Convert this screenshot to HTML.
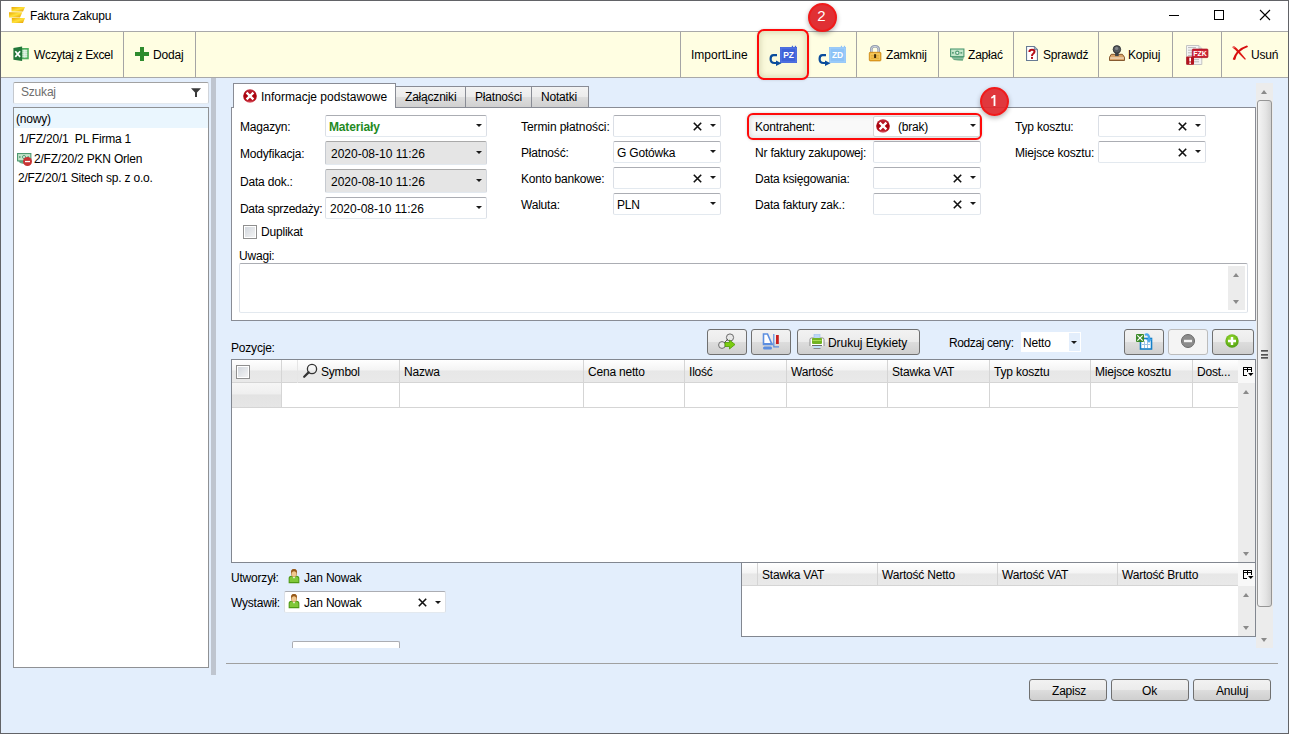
<!DOCTYPE html>
<html><head><meta charset="utf-8">
<style>
*{margin:0;padding:0;box-sizing:border-box}
html,body{width:1289px;height:734px;overflow:hidden;background:#e3eefc;font-family:"Liberation Sans",sans-serif;font-size:12px;color:#1e1e1e}
.a{position:absolute}
.t{position:absolute;font-size:12px;line-height:14px;white-space:nowrap;color:#000;letter-spacing:-0.2px}
#win{position:absolute;left:0;top:0;width:1289px;height:734px;border:1px solid #626367;background:#e3eefc}
#title{position:absolute;left:1px;top:1px;width:1287px;height:30px;background:#fff}
#tb{position:absolute;left:1px;top:31px;width:1287px;height:47px;background:#fffee2;border-top:1px solid #a9a9a9;border-bottom:1px solid #a9a9a9}
.sep{position:absolute;top:32px;width:1px;height:45px;background:#a5a5a5}
.combo{position:absolute;background:#fff;border:1px solid #abadb3;border-radius:2px;border-bottom-color:#e3e9ef;border-left-color:#dbdfe6;border-right-color:#dbdfe6}
.dis{background:#e5e5e5;border-color:#a9a9a9 #d2d6dc #e3e9ef #c6cad0}
.arr{position:absolute;width:0;height:0;border-left:3px solid transparent;border-right:3px solid transparent;border-top:3px solid #1a1a1a}
.xg{position:absolute;width:9px;height:9px}
.btn{position:absolute;border:1px solid #707070;border-radius:3px;background:linear-gradient(#f2f2f2 0%,#ebebeb 50%,#dddddd 50%,#cfcfcf 100%)}
.hdr{position:absolute;background:linear-gradient(#ffffff 0%,#f4f4f4 45%,#e7e7e7 50%,#e9e9e9 100%)}
.vs{position:absolute;width:1px;background:#d5d5d5}
.sa{position:absolute;width:0;height:0;border-left:3.5px solid transparent;border-right:3.5px solid transparent}
.up{border-bottom:4px solid #8a8a8a}
.dn{border-top:4px solid #8a8a8a}
</style></head><body>
<div id="win"></div>
<div id="title"></div>
<div id="tb"></div>

<!-- title bar -->
<svg class="a" style="left:9px;top:7px" width="16" height="16" viewBox="0 0 16 16">
<defs><linearGradient id="cg" x1="0" y1="0" x2="1" y2="1"><stop offset="0" stop-color="#e8a400"/><stop offset="0.5" stop-color="#ffe23a"/><stop offset="1" stop-color="#e39a00"/></linearGradient></defs>
<path d="M2.5 0 H16 L14 4.6 H2.5 Z" fill="url(#cg)"/>
<path d="M0 5.2 H13.3 L11 10.4 H0 Z" fill="url(#cg)"/>
<path d="M2.8 10.9 H16 L14 16 H2.8 Z" fill="url(#cg)"/>
</svg>
<div class="t" style="left:30px;top:9px;color:#000">Faktura Zakupu</div>
<div class="a" style="left:1169px;top:15px;width:10px;height:1px;background:#000"></div>
<div class="a" style="left:1214px;top:10px;width:10px;height:10px;border:1px solid #000"></div>
<svg class="a" style="left:1259px;top:9px" width="12" height="12" viewBox="0 0 12 12"><path d="M1 1 L11 11 M11 1 L1 11" stroke="#000" stroke-width="1.1"/></svg>

<!-- toolbar separators -->
<div class="sep" style="left:123px"></div>
<div class="sep" style="left:195px"></div>
<div class="sep" style="left:680px"></div>
<div class="sep" style="left:856px"></div>
<div class="sep" style="left:938px"></div>
<div class="sep" style="left:1013px"></div>
<div class="sep" style="left:1098px"></div>
<div class="sep" style="left:1172px"></div>
<div class="sep" style="left:1221px"></div>

<!-- toolbar items -->
<svg class="a" style="left:13px;top:46px" width="16" height="16" viewBox="0 0 16 16">
<rect x="9" y="2" width="6.8" height="11.3" fill="#4fae5c"/>
<rect x="9.4" y="3.8" width="4.8" height="7.8" fill="#b9dfbf"/>
<path d="M9.4 4.3H14.2M9.4 6.3H14.2M9.4 8.3H14.2M9.4 10.3H14.2M11.8 3.8V11.6" stroke="#e9f6eb" stroke-width="0.8"/>
<path d="M0.4 2 L9.1 0.6 V15.1 L0.4 13.8 Z" fill="#23773a"/>
<path d="M2.3 5.3 L7.1 10.9 M7.1 5.3 L2.3 10.9" stroke="#fff" stroke-width="1.7"/>
</svg>
<div class="t" style="left:34px;top:48px;letter-spacing:-0.35px">Wczytaj z Excel</div>
<svg class="a" style="left:135px;top:47px" width="14" height="14" viewBox="0 0 14 14"><path d="M5 0h4v5h5v4H9v5H5V9H0V5h5z" fill="#2e8b2e"/></svg>
<div class="t" style="left:153px;top:48px">Dodaj</div>
<div class="t" style="left:691px;top:48px;letter-spacing:0">ImportLine</div>

<!-- red highlight box 2 -->
<div class="a" style="left:757px;top:29px;width:52px;height:51px;border:2px solid #ff0a0a;border-radius:7px;box-shadow:inset 0 0 6px 1px rgba(120,120,60,0.28), 0 0 3px rgba(0,0,0,0.15);background:#fbfadc"></div>
<!-- PZ icon -->
<svg class="a" style="left:766px;top:42px" width="34" height="26" viewBox="0 0 34 26">
<rect x="14" y="5" width="17" height="16" fill="#3f63d8"/>
<rect x="15" y="6" width="15" height="14" fill="none" stroke="#5a7ae6" stroke-width="1"/>
<rect x="25.8" y="3.8" width="1.3" height="1.5" fill="#3f63d8"/><rect x="28.8" y="3.8" width="1.3" height="1.5" fill="#3f63d8"/>
<text x="22.6" y="15.8" font-family="Liberation Sans" font-weight="bold" font-size="8.5" fill="#fff" text-anchor="middle">PZ</text>
<path d="M11 13.1 H7.5 Q4.6 13.1 4.6 17 Q4.6 21 8.5 21 H10.5" stroke="#0a4c9c" stroke-width="2.2" fill="none"/>
<path d="M10 18.6 L15.5 21.3 L10 24 Z" fill="#0a4c9c"/>
</svg>
<svg class="a" style="left:815px;top:42px" width="34" height="26" viewBox="0 0 34 26">
<rect x="14" y="5" width="17" height="16" fill="#8ec3f7"/>
<rect x="15" y="6" width="15" height="14" fill="none" stroke="#a6d2fa" stroke-width="1"/>
<rect x="25.8" y="3.8" width="1.3" height="1.5" fill="#8ec3f7"/><rect x="28.8" y="3.8" width="1.3" height="1.5" fill="#8ec3f7"/>
<text x="22.6" y="15.8" font-family="Liberation Sans" font-weight="bold" font-size="8.5" fill="#fff" text-anchor="middle">ZD</text>
<path d="M11 13.1 H7.5 Q4.6 13.1 4.6 17 Q4.6 21 8.5 21 H10.5" stroke="#0a4c9c" stroke-width="2.2" fill="none"/>
<path d="M10 18.6 L15.5 21.3 L10 24 Z" fill="#0a4c9c"/>
</svg>

<!-- lock -->
<svg class="a" style="left:868px;top:45px" width="14" height="17" viewBox="0 0 14 17">
<path d="M3.3 7.5 V4.6 Q3.3 1.3 7 1.3 Q10.7 1.3 10.7 4.6 V7.5" stroke="#8e98aa" stroke-width="2.6" fill="none"/>
<path d="M3.3 7 V4.6 Q3.3 1.3 7 1.3 Q10.7 1.3 10.7 4.6 V7" stroke="#d8dde6" stroke-width="0.9" fill="none"/>
<rect x="1.3" y="7.3" width="11.6" height="8.6" rx="0.8" fill="#eba629" stroke="#c98512" stroke-width="0.8"/>
<rect x="2.4" y="8.3" width="9.4" height="6.6" fill="#f9d46a"/>
<path d="M3 10.2H11.2M3 12H11.2M3 13.8H11.2" stroke="#dc9c22" stroke-width="0.9"/>
<rect x="6.1" y="9.2" width="2" height="3.8" fill="#3e2a08"/>
</svg>
<div class="t" style="left:886px;top:48px">Zamknij</div>
<!-- money -->
<svg class="a" style="left:950px;top:48px" width="15" height="14" viewBox="0 0 15 14">
<path d="M1 8.6 L14 8.6 L12.8 12.8 Q8 12.6 3.8 12 Z" fill="#6aaa84"/>
<path d="M2.5 10.2 L13.2 10.4" stroke="#9ccab0" stroke-width="0.8"/>
<rect x="0.6" y="1" width="13.3" height="7.6" fill="#c4e6ca" stroke="#4f9a72" stroke-width="1.1"/>
<circle cx="7.3" cy="4.8" r="1.7" fill="#eef7f0" stroke="#4f9a72" stroke-width="1.1"/>
<rect x="2" y="4" width="1.8" height="1.7" fill="#5fa07c"/><rect x="10.4" y="4" width="1.8" height="1.7" fill="#5fa07c"/>
</svg>
<div class="t" style="left:968px;top:48px">Zapłać</div>
<!-- question doc -->
<svg class="a" style="left:1026px;top:46px" width="13" height="15" viewBox="0 0 13 15">
<path d="M0.55 0.55 H8.3 L11.45 3.7 V14.45 H0.55 Z" fill="#fff" stroke="#687b94" stroke-width="1.1"/>
<path d="M8.3 0.55 V3.7 H11.45" fill="#9aaabb" stroke="#687b94" stroke-width="0.8"/>
<path d="M3.4 6 Q3.4 3.8 6 3.8 Q8.5 3.8 8.5 5.8 Q8.5 7 7 7.8 Q6 8.3 6 9.9" stroke="#b50d16" stroke-width="2" fill="none"/>
<rect x="5" y="10.9" width="2" height="2" fill="#b50d16"/>
</svg>
<div class="t" style="left:1043px;top:48px">Sprawdź</div>
<!-- stamp -->
<svg class="a" style="left:1109px;top:45px" width="16" height="16" viewBox="0 0 16 16">
<path d="M2.2 9.3 H13.4 L15.5 12.2 V15.5 H0.5 V12.2 Z" fill="#d9a46a" stroke="#7a4c22" stroke-width="0.9"/>
<rect x="1.2" y="12.4" width="13.6" height="1.3" fill="#f2dcc0"/>
<rect x="6.1" y="6.5" width="3.6" height="4.6" fill="#3e4246"/>
<circle cx="7.9" cy="4.4" r="3.8" fill="#55595e" stroke="#2a2c2e" stroke-width="0.8"/>
<circle cx="7.6" cy="3.4" r="1.6" fill="#a0a4a8" opacity="0.6"/>
</svg>
<div class="t" style="left:1128px;top:48px">Kopiuj</div>
<!-- FZK -->
<svg class="a" style="left:1186px;top:45px" width="23" height="20" viewBox="0 0 23 20">
<path d="M0.5 0.5 H12.8 L15.8 3.5 V19.5 H0.5 Z" fill="#f4f4f4" stroke="#c4c4c4"/>
<path d="M12.8 0.5 V3.5 H15.8" fill="#e0e0e0" stroke="#b8b8b8" stroke-width="0.6"/>
<path d="M2 2.6H10M2 5.2H6M2 7.8H6M2 10.4H6M8 14.6H13M8 16.8H13" stroke="#b4b4b4" stroke-width="0.9"/>
<rect x="6.3" y="4.1" width="15.6" height="8.5" rx="0.8" fill="#cc2232" stroke="#a81222" stroke-width="0.8"/>
<text x="14.1" y="11.3" font-family="Liberation Sans" font-weight="bold" font-size="7" fill="#fff" text-anchor="middle">FZK</text>
<rect x="0.2" y="11.4" width="7.8" height="8.4" rx="1" fill="#b3141e"/>
<rect x="3.3" y="12.7" width="1.7" height="3.8" fill="#fff"/><rect x="3.3" y="17.4" width="1.7" height="1.5" fill="#fff"/>
</svg>
<!-- usun X -->
<svg class="a" style="left:1232px;top:45px" width="17" height="17" viewBox="0 0 17 17">
<path d="M0.4 2.6 Q0.6 0.9 2.6 1.4 Q4.5 2.3 7.5 6.2 L13.9 13.9 Q13.6 14.9 12.6 14.5 L5.5 7.2 Q3 4.6 0.4 2.6 Z" fill="#de1a14"/>
<path d="M15.9 2 Q9.8 4 6.4 7.8 Q4.3 10.4 3.4 14.6 Q2.2 15.6 0.7 14.2 Q2 10 5 6.4 Q9 2.2 14.8 0.5 Q16 0.6 15.9 2 Z" fill="#d80e0e"/>
<circle cx="1.8" cy="2.2" r="1" fill="#f08a8a" opacity="0.7"/>
</svg>
<div class="t" style="left:1251px;top:48px">Usuń</div>

<!-- left panel -->
<div class="combo" style="left:13px;top:82px;width:196px;height:22px;border-color:#a2a2a2 #d0d4da #e3e9ef #c4c8ce"></div>
<div class="t" style="left:21px;top:85px;color:#6d6d6d">Szukaj</div>
<svg class="a" style="left:191px;top:88px" width="10" height="9" viewBox="0 0 10 9"><path d="M0 0.2 H10 L6 4.6 V9 H4 V4.6 Z" fill="#3a3a3a"/></svg>
<div class="a" style="left:13px;top:107px;width:196px;height:561px;border:1px solid #8f9194;background:#fff"></div>
<div class="a" style="left:14px;top:108px;width:194px;height:20px;background:#eaf6fe"></div>
<div class="t" style="left:16px;top:112px">(nowy)</div>
<div class="t" style="left:19px;top:132px">1/FZ/20/1&nbsp; PL Firma 1</div>
<svg class="a" style="left:17px;top:153px" width="16" height="14" viewBox="0 0 16 14">
<path d="M1 7.8 L9 7.8 L9 11 Q5 10.8 3 10 Z" fill="#6aaa84"/>
<rect x="0.55" y="0.55" width="13.3" height="7.3" fill="#c4e6ca" stroke="#4f9a72" stroke-width="1.1"/>
<circle cx="7" cy="4" r="1.5" fill="#eef7f0" stroke="#4f9a72" stroke-width="1"/>
<rect x="2" y="3.2" width="1.6" height="1.6" fill="#5fa07c"/><rect x="10.4" y="3.2" width="1.6" height="1.6" fill="#5fa07c"/>
<circle cx="10.5" cy="8.5" r="4.5" fill="#c83434"/>
<rect x="8" y="7.9" width="5" height="1.3" fill="#fff"/>
</svg>
<div class="t" style="left:34px;top:152px">2/FZ/20/2 PKN Orlen</div>
<div class="t" style="left:18px;top:171px">2/FZ/20/1 Sitech sp. z o.o.</div>

<!-- splitter -->
<div class="a" style="left:211px;top:78px;width:5px;height:597px;background:#bfc5cf"></div>


<!-- tabs -->
<div class="a" style="left:395px;top:86px;width:71px;height:22px;border:1px solid #898c95;border-bottom:none;background:linear-gradient(#f3f3f3 0%,#ebebeb 50%,#dddddd 50%,#cfcfcf 100%)"></div>
<div class="a" style="left:465px;top:86px;width:67px;height:22px;border:1px solid #898c95;border-bottom:none;background:linear-gradient(#f3f3f3 0%,#ebebeb 50%,#dddddd 50%,#cfcfcf 100%)"></div>
<div class="a" style="left:531px;top:86px;width:58px;height:22px;border:1px solid #898c95;border-bottom:none;background:linear-gradient(#f3f3f3 0%,#ebebeb 50%,#dddddd 50%,#cfcfcf 100%)"></div>
<div class="a" style="left:231px;top:107px;width:1025px;height:214px;border:1px solid #898c95;background:#fff"></div>
<div class="a" style="left:233px;top:83px;width:163px;height:25px;border:1px solid #898c95;border-bottom:none;background:#fff"></div>

<div class="t" style="left:405px;top:90px">Załączniki</div>
<div class="t" style="left:475px;top:90px">Płatności</div>
<div class="t" style="left:541px;top:90px">Notatki</div>
<svg class="a" style="left:243px;top:89px" width="14" height="14" viewBox="0 0 14 14">
<defs><linearGradient id="rg" x1="0" y1="0" x2="0" y2="1"><stop offset="0" stop-color="#c43040"/><stop offset="0.45" stop-color="#a8000c"/><stop offset="0.8" stop-color="#b8101c"/><stop offset="1" stop-color="#e06a78"/></linearGradient></defs>
<circle cx="7" cy="7" r="6.8" fill="url(#rg)"/>
<path d="M3.6 3.6 L10.4 10.4 M10.4 3.6 L3.6 10.4" stroke="#fff" stroke-width="2.3"/>
</svg>
<div class="t" style="left:261px;top:90px;letter-spacing:0">Informacje podstawowe</div>

<!-- col1 -->
<div class="t" style="left:240px;top:120px">Magazyn:</div>
<div class="combo" style="left:325px;top:115px;width:162px;height:22px"></div>
<div class="t" style="left:329px;top:120px;color:#1f8a1f;font-weight:bold;letter-spacing:-0.15px">Materiały</div>
<div class="arr" style="left:476px;top:124px"></div>
<div class="t" style="left:240px;top:147px">Modyfikacja:</div>
<div class="combo dis" style="left:325px;top:141px;width:162px;height:24px"></div>
<div class="t" style="left:331px;top:147px;letter-spacing:0">2020-08-10 11:26</div>
<div class="arr" style="left:476px;top:151px"></div>
<div class="t" style="left:240px;top:175px">Data dok.:</div>
<div class="combo dis" style="left:325px;top:169px;width:162px;height:24px"></div>
<div class="t" style="left:331px;top:175px;letter-spacing:0">2020-08-10 11:26</div>
<div class="arr" style="left:476px;top:179px"></div>
<div class="t" style="left:240px;top:202px;letter-spacing:-0.3px">Data sprzedaży:</div>
<div class="combo" style="left:325px;top:197px;width:162px;height:22px"></div>
<div class="t" style="left:330px;top:202px;letter-spacing:0">2020-08-10 11:26</div>
<div class="arr" style="left:476px;top:206px"></div>
<div class="a" style="left:243px;top:225px;width:14px;height:14px;border:1px solid #8f8f8f;box-shadow:inset 0 0 0 1px #fff;background:linear-gradient(135deg,#cfd4db,#f6f6f6)"></div>
<div class="t" style="left:261px;top:225px">Duplikat</div>

<!-- col2 -->
<div class="t" style="left:521px;top:120px;letter-spacing:-0.08px">Termin płatności:</div>
<div class="combo" style="left:613px;top:115px;width:108px;height:22px"></div>
<svg class="xg" style="left:693px;top:122px" viewBox="0 0 9 9"><path d="M0.8 0.8 L8.2 8.2 M8.2 0.8 L0.8 8.2" stroke="#111" stroke-width="1.6"/></svg>
<div class="arr" style="left:710px;top:124px"></div>
<div class="t" style="left:521px;top:146px">Płatność:</div>
<div class="combo" style="left:613px;top:141px;width:108px;height:22px"></div>
<div class="t" style="left:617px;top:146px">G Gotówka</div>
<div class="arr" style="left:710px;top:150px"></div>
<div class="t" style="left:521px;top:172px">Konto bankowe:</div>
<div class="combo" style="left:613px;top:167px;width:108px;height:22px"></div>
<svg class="xg" style="left:693px;top:174px" viewBox="0 0 9 9"><path d="M0.8 0.8 L8.2 8.2 M8.2 0.8 L0.8 8.2" stroke="#111" stroke-width="1.6"/></svg>
<div class="arr" style="left:710px;top:176px"></div>
<div class="t" style="left:521px;top:198px">Waluta:</div>
<div class="combo" style="left:613px;top:193px;width:108px;height:22px"></div>
<div class="t" style="left:617px;top:198px">PLN</div>
<div class="arr" style="left:710px;top:202px"></div>

<!-- col3 -->
<div class="a" style="left:747px;top:113px;width:235px;height:27px;border:2px solid #ff0a0a;border-radius:6px;box-shadow:inset 0 0 5px 1px rgba(0,0,0,0.12), 0 0 3px rgba(0,0,0,0.18);background:#f9f9f9"></div>
<div class="combo" style="left:873px;top:116px;width:107px;height:21px;border-color:#d6d6d6"></div>
<div class="t" style="left:755px;top:120px">Kontrahent:</div>
<svg class="a" style="left:876px;top:119px" width="14" height="14" viewBox="0 0 14 14">
<circle cx="7" cy="7" r="6.8" fill="url(#rg)"/>
<path d="M3.6 3.6 L10.4 10.4 M10.4 3.6 L3.6 10.4" stroke="#fff" stroke-width="2.3"/>
</svg>
<div class="t" style="left:898px;top:120px">(brak)</div>
<div class="arr" style="left:970px;top:124px"></div>
<div class="t" style="left:755px;top:146px">Nr faktury zakupowej:</div>
<div class="combo" style="left:873px;top:141px;width:108px;height:22px"></div>
<div class="t" style="left:755px;top:172px">Data księgowania:</div>
<div class="combo" style="left:873px;top:167px;width:108px;height:22px"></div>
<svg class="xg" style="left:953px;top:174px" viewBox="0 0 9 9"><path d="M0.8 0.8 L8.2 8.2 M8.2 0.8 L0.8 8.2" stroke="#111" stroke-width="1.6"/></svg>
<div class="arr" style="left:970px;top:176px"></div>
<div class="t" style="left:755px;top:198px">Data faktury zak.:</div>
<div class="combo" style="left:873px;top:193px;width:108px;height:22px"></div>
<svg class="xg" style="left:953px;top:200px" viewBox="0 0 9 9"><path d="M0.8 0.8 L8.2 8.2 M8.2 0.8 L0.8 8.2" stroke="#111" stroke-width="1.6"/></svg>
<div class="arr" style="left:970px;top:202px"></div>

<!-- col4 -->
<div class="t" style="left:1015px;top:120px">Typ kosztu:</div>
<div class="combo" style="left:1098px;top:115px;width:108px;height:22px"></div>
<svg class="xg" style="left:1178px;top:122px" viewBox="0 0 9 9"><path d="M0.8 0.8 L8.2 8.2 M8.2 0.8 L0.8 8.2" stroke="#111" stroke-width="1.6"/></svg>
<div class="arr" style="left:1195px;top:124px"></div>
<div class="t" style="left:1015px;top:146px">Miejsce kosztu:</div>
<div class="combo" style="left:1098px;top:141px;width:108px;height:22px"></div>
<svg class="xg" style="left:1178px;top:148px" viewBox="0 0 9 9"><path d="M0.8 0.8 L8.2 8.2 M8.2 0.8 L0.8 8.2" stroke="#111" stroke-width="1.6"/></svg>
<div class="arr" style="left:1195px;top:150px"></div>

<!-- uwagi -->
<div class="t" style="left:239px;top:249px">Uwagi:</div>
<div class="combo" style="left:239px;top:263px;width:1009px;height:50px"></div>
<div class="a" style="left:1228px;top:266px;width:17px;height:44px;background:#ececec"></div>
<div class="sa up" style="left:1233px;top:273px"></div>
<div class="sa dn" style="left:1233px;top:300px"></div>

<!-- main scrollbar -->
<div class="a" style="left:1256px;top:83px;width:17px;height:565px;background:#ececec"></div>
<div class="sa up" style="left:1261px;top:90px"></div>
<div class="sa dn" style="left:1261px;top:638px"></div>
<div class="a" style="left:1257px;top:100px;width:15px;height:507px;border:1px solid #959595;border-radius:3px;background:linear-gradient(90deg,#f4f4f4,#e4e4e4 60%,#d2d2d2)"></div>
<div class="a" style="left:1261px;top:350px;width:7px;height:2px;background:linear-gradient(#3c3c3c,#9a9a9a)"></div>
<div class="a" style="left:1261px;top:353.6px;width:7px;height:2px;background:linear-gradient(#3c3c3c,#9a9a9a)"></div>
<div class="a" style="left:1261px;top:357.2px;width:7px;height:2px;background:linear-gradient(#3c3c3c,#9a9a9a)"></div>

<!-- pozycje -->
<div class="t" style="left:231px;top:341px">Pozycje:</div>
<div class="btn" style="left:707px;top:329px;width:40px;height:26px"></div>
<div class="btn" style="left:751px;top:329px;width:40px;height:26px"></div>
<div class="btn" style="left:797px;top:329px;width:123px;height:26px"></div>
<div class="t" style="left:828px;top:336px;letter-spacing:-0.05px">Drukuj Etykiety</div>
<div class="t" style="left:949px;top:336px;letter-spacing:-0.4px">Rodzaj ceny:</div>
<div class="a" style="left:1021px;top:332px;width:60px;height:20px;background:#fff"></div>
<div class="a" style="left:1069px;top:333px;width:11px;height:18px;background:#e3eefc"></div>
<div class="t" style="left:1023px;top:336px">Netto</div>
<div class="arr" style="left:1071px;top:341px"></div>
<div class="btn" style="left:1124px;top:329px;width:40px;height:26px"></div>
<div class="btn" style="left:1168px;top:329px;width:40px;height:26px;border-color:#bcbcbc;background:#f4f4f4"></div>
<div class="btn" style="left:1212px;top:329px;width:42px;height:26px"></div>


<!-- pozycje button icons -->
<svg class="a" style="left:718px;top:333px" width="18" height="17" viewBox="0 0 18 17">
<circle cx="4" cy="12" r="3.4" fill="#e8e8e8" stroke="#6a6a6a" stroke-width="1"/>
<circle cx="12" cy="4.5" r="3.6" fill="#e8e8e8" stroke="#6a6a6a" stroke-width="1"/>
<path d="M6 10 L10 6" stroke="#5a5a5a" stroke-width="1"/>
<path d="M7 9.5 H11.5 V7 L17 11.5 L11.5 16 V13.5 H7 Z" fill="#7ccc10" stroke="#4a9a08" stroke-width="0.8"/>
</svg>
<svg class="a" style="left:762px;top:333px" width="18" height="17" viewBox="0 0 18 17">
<path d="M1.5 1 H5.5 L10 11.5 H1.5 Z" fill="#fff" stroke="#5b8ee0" stroke-width="1.6"/>
<rect x="1" y="10" width="9.5" height="2" fill="#5b8ee0"/>
<rect x="1" y="13.5" width="9" height="3" rx="1.5" fill="#5b8ee0"/>
<path d="M11.8 1 V13.8 H17" stroke="#5b8ee0" stroke-width="1.2" fill="none"/>
<rect x="14" y="2" width="2.8" height="9" fill="#c82020"/>
</svg>
<svg class="a" style="left:809px;top:334px" width="16" height="15" viewBox="0 0 16 15">
<path d="M1 12 V5.5 Q1 4 2.5 4 H13.5 Q15 4 15 5.5 V12" stroke="#8a8a8a" stroke-width="1" fill="#fff"/>
<rect x="5" y="0.5" width="6" height="4.5" fill="#bcd8f6" stroke="#9fc0e8" stroke-width="0.6"/>
<rect x="3" y="4" width="10" height="6" rx="1" fill="#72b322"/>
<rect x="3.5" y="6" width="9" height="1" fill="#a8dc50"/>
<rect x="4.5" y="11" width="7" height="3.5" fill="#bfe0fa"/>
<rect x="3" y="11" width="10" height="1" fill="#6a6a6a"/>
<rect x="4.5" y="14" width="7" height="1" fill="#8a8a8a"/>
</svg>
<svg class="a" style="left:1136px;top:333px" width="17" height="17" viewBox="0 0 17 17">
<rect x="4.5" y="5.5" width="11" height="10.5" fill="#fff" stroke="#1580c8" stroke-width="1.6"/>
<path d="M6 11.5 H14 M8.5 8 V15 M11.5 8 V15" stroke="#9cc4e6" stroke-width="1"/>
<rect x="0" y="1" width="8" height="8" rx="1" fill="#3a8a28"/>
<path d="M1.3 2.3 L6.7 7.7 M6.7 2.3 L1.3 7.7" stroke="#fff" stroke-width="1.2"/>
<path d="M9 2 Q12 0 13 4 V7" stroke="#4aa8ee" stroke-width="2.4" fill="none"/>
<path d="M10 6 H16 L13 10 Z" fill="#4aa8ee"/>
</svg>
<svg class="a" style="left:1181px;top:334px" width="14" height="14" viewBox="0 0 14 14">
<circle cx="7" cy="7" r="6.5" fill="#8c8c8c" stroke="#6a6a6a" stroke-width="1"/>
<rect x="3" y="5.8" width="8" height="2.4" fill="#f4f4f4"/>
</svg>
<svg class="a" style="left:1225px;top:334px" width="14" height="14" viewBox="0 0 14 14">
<defs><radialGradient id="gg" cx="0.45" cy="0.35" r="0.7"><stop offset="0" stop-color="#9ee030"/><stop offset="1" stop-color="#4a9a10"/></radialGradient></defs>
<circle cx="7" cy="7" r="6.7" fill="url(#gg)"/>
<path d="M7 3 V11 M3 7 H11" stroke="#fff" stroke-width="2.4"/>
</svg>

<!-- grid -->
<div class="a" style="left:231px;top:359px;width:1025px;height:204px;border:1px solid #828790;background:#fff"></div>
<div class="hdr" style="left:232px;top:360px;width:1006px;height:23px;border-bottom:1px solid #d5d5d5"></div>
<div class="a" style="left:232px;top:383px;width:50px;height:24px;background:linear-gradient(#f6f6f6 0%,#efefef 45%,#e3e3e3 50%,#e6e6e6 100%)"></div>
<div class="a" style="left:232px;top:407px;width:1006px;height:1px;background:#d5d5d5"></div>
<div class="vs" style="left:281px;top:360px;height:47px"></div>
<div class="vs" style="left:297px;top:360px;height:23px;background:#e6e6e6"></div>
<div class="vs" style="left:399px;top:360px;height:47px"></div>
<div class="vs" style="left:583px;top:360px;height:47px"></div>
<div class="vs" style="left:684px;top:360px;height:47px"></div>
<div class="vs" style="left:786px;top:360px;height:47px"></div>
<div class="vs" style="left:887px;top:360px;height:47px"></div>
<div class="vs" style="left:989px;top:360px;height:47px"></div>
<div class="vs" style="left:1090px;top:360px;height:47px"></div>
<div class="vs" style="left:1192px;top:360px;height:47px"></div>
<div class="a" style="left:236px;top:365px;width:14px;height:14px;border:1px solid #8f8f8f;box-shadow:inset 0 0 0 1px #fff;background:linear-gradient(135deg,#cfd4db,#f6f6f6)"></div>
<svg class="a" style="left:303px;top:363px" width="15" height="15" viewBox="0 0 15 15"><circle cx="9" cy="6" r="4.6" stroke="#333" stroke-width="1.3" fill="none"/><path d="M5.6 9.4 L1.2 13.8" stroke="#333" stroke-width="2.2" stroke-linecap="round"/></svg>
<div class="t" style="left:321px;top:365px">Symbol</div>
<div class="t" style="left:404px;top:365px">Nazwa</div>
<div class="t" style="left:588px;top:365px">Cena netto</div>
<div class="t" style="left:689px;top:365px">Ilość</div>
<div class="t" style="left:791px;top:365px">Wartość</div>
<div class="t" style="left:892px;top:365px">Stawka VAT</div>
<div class="t" style="left:994px;top:365px">Typ kosztu</div>
<div class="t" style="left:1095px;top:365px">Miejsce kosztu</div>
<div class="t" style="left:1197px;top:365px">Dost...</div>
<div class="a" style="left:1238px;top:360px;width:17px;height:23px;background:#f8f8f8"></div>
<svg class="a" style="left:1243px;top:367px" width="11" height="10" viewBox="0 0 11 10"><path d="M0 0 H9 V3 H0 Z" fill="#000"/><path d="M1 1 H4 V2 H1 Z M5 1 H8 V2 H5 Z" fill="#fff"/><path d="M0 0 H1 V8 H4 V9 H0 Z M4 3 H5 V5 H4 Z M8 3 H9 V5 H8 Z" fill="#000"/><path d="M5 6 H10.5 L7.75 9 Z" fill="#000"/></svg>
<div class="a" style="left:1238px;top:383px;width:17px;height:179px;background:#ececec"></div>
<div class="sa up" style="left:1243px;top:390px"></div>
<div class="sa dn" style="left:1243px;top:552px"></div>

<!-- bottom -->
<div class="t" style="left:231px;top:571px">Utworzył:</div>
<svg class="a" style="left:288px;top:568px" width="12" height="16" viewBox="0 0 12 16">
<path d="M1.2 14.6 V10.5 Q1.2 8.2 3.5 8.2 H8.5 Q10.8 8.2 10.8 10.5 V14.6 Z" fill="#80c838" stroke="#4f9a14" stroke-width="1.1"/>
<path d="M4.6 8.2 L6 10.8 L7.4 8.2 Z" fill="#fff"/>
<ellipse cx="6" cy="4.9" rx="2.9" ry="3.9" fill="#b87a38"/>
<ellipse cx="6" cy="5.9" rx="2.2" ry="2.7" fill="#f0c88e"/>
<path d="M3.1 5.2 Q2.6 0.9 6 0.9 Q9.4 0.9 8.9 5.2 Q8.4 3.2 6 3 Q3.6 3.2 3.1 5.2 Z" fill="#94581a"/>
</svg>
<div class="t" style="left:304px;top:571px">Jan Nowak</div>
<div class="t" style="left:231px;top:596px">Wystawił:</div>
<div class="combo" style="left:284px;top:591px;width:162px;height:22px"></div>
<svg class="a" style="left:288px;top:593px" width="12" height="16" viewBox="0 0 12 16">
<path d="M1.2 14.6 V10.5 Q1.2 8.2 3.5 8.2 H8.5 Q10.8 8.2 10.8 10.5 V14.6 Z" fill="#80c838" stroke="#4f9a14" stroke-width="1.1"/>
<path d="M4.6 8.2 L6 10.8 L7.4 8.2 Z" fill="#fff"/>
<ellipse cx="6" cy="4.9" rx="2.9" ry="3.9" fill="#b87a38"/>
<ellipse cx="6" cy="5.9" rx="2.2" ry="2.7" fill="#f0c88e"/>
<path d="M3.1 5.2 Q2.6 0.9 6 0.9 Q9.4 0.9 8.9 5.2 Q8.4 3.2 6 3 Q3.6 3.2 3.1 5.2 Z" fill="#94581a"/>
</svg>
<div class="t" style="left:304px;top:596px">Jan Nowak</div>
<svg class="xg" style="left:418px;top:598px" viewBox="0 0 9 9"><path d="M0.8 0.8 L8.2 8.2 M8.2 0.8 L0.8 8.2" stroke="#111" stroke-width="1.6"/></svg>
<div class="arr" style="left:435px;top:601px"></div>
<div class="a" style="left:292px;top:641px;width:108px;height:7px;border:1px solid #abadb3;border-bottom:none;border-radius:2px 2px 0 0;background:#fff"></div>

<!-- vat grid -->
<div class="a" style="left:741px;top:562px;width:515px;height:75px;border:1px solid #828790;background:#fff"></div>
<div class="hdr" style="left:742px;top:563px;width:496px;height:23px;border-bottom:1px solid #d5d5d5"></div>
<div class="vs" style="left:757px;top:563px;height:23px"></div>
<div class="vs" style="left:877px;top:563px;height:23px"></div>
<div class="vs" style="left:997px;top:563px;height:23px"></div>
<div class="vs" style="left:1117px;top:563px;height:23px"></div>
<div class="t" style="left:762px;top:568px">Stawka VAT</div>
<div class="t" style="left:882px;top:568px">Wartość Netto</div>
<div class="t" style="left:1002px;top:568px">Wartość VAT</div>
<div class="t" style="left:1122px;top:568px">Wartość Brutto</div>
<div class="a" style="left:1238px;top:563px;width:17px;height:23px;background:#f8f8f8"></div>
<svg class="a" style="left:1243px;top:570px" width="11" height="10" viewBox="0 0 11 10"><path d="M0 0 H9 V3 H0 Z" fill="#000"/><path d="M1 1 H4 V2 H1 Z M5 1 H8 V2 H5 Z" fill="#fff"/><path d="M0 0 H1 V8 H4 V9 H0 Z M4 3 H5 V5 H4 Z M8 3 H9 V5 H8 Z" fill="#000"/><path d="M5 6 H10.5 L7.75 9 Z" fill="#000"/></svg>
<div class="a" style="left:1238px;top:586px;width:17px;height:50px;background:#ececec"></div>
<div class="sa up" style="left:1243px;top:593px"></div>
<div class="sa dn" style="left:1243px;top:626px"></div>

<div class="a" style="left:226px;top:663px;width:1052px;height:1px;background:#a0a0a0"></div>
<div class="btn" style="left:1029px;top:679px;width:78px;height:22px"></div>
<div class="btn" style="left:1111px;top:679px;width:78px;height:22px"></div>
<div class="btn" style="left:1193px;top:679px;width:78px;height:22px"></div>
<div class="t" style="left:1052px;top:684px">Zapisz</div>
<div class="t" style="left:1142px;top:684px">Ok</div>
<div class="t" style="left:1216px;top:684px">Anuluj</div>

<!-- annotation circles -->
<div class="a" style="left:808px;top:2.5px;width:29px;height:29px;border-radius:50%;background:#e03034;border:2px solid #f01a1a;box-shadow:0 2px 5px rgba(0,0,0,0.3)"></div>
<div class="a" style="left:807px;top:1px;width:29px;height:29px;line-height:29px;text-align:center;color:#fff;font-size:15px">2</div>
<div class="a" style="left:980px;top:86.6px;width:29px;height:29px;border-radius:50%;background:rgba(224,40,44,0.92);border:2px solid #f01a1a;box-shadow:0 2px 5px rgba(0,0,0,0.3)"></div>
<svg class="a" style="left:980px;top:86px" width="29" height="29" viewBox="0 0 29 29"><path d="M13.6 9 H15.4 V20 H13.6 V11.4 Q12.6 12.2 11.2 12.6 V11 Q12.8 10.4 13.6 9 Z" fill="#fff"/></svg>

</body></html>
